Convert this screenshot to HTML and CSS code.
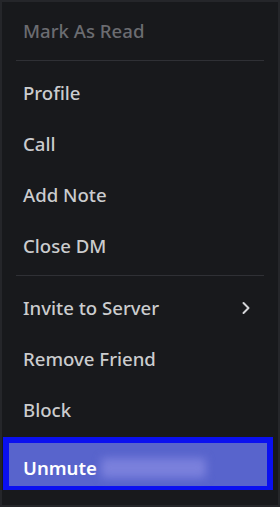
FILE: index.html
```html
<!DOCTYPE html>
<html>
<head>
<meta charset="utf-8">
<link rel="stylesheet" href="styles.css">
</head>
<body>
<div class="menu">
  <div class="item disabled">Mark As Read</div>
  <div class="sep"></div>
  <div class="item">Profile</div>
  <div class="item">Call</div>
  <div class="item">Add Note</div>
  <div class="item">Close DM</div>
  <div class="sep"></div>
  <div class="item">Invite to Server
    <svg class="chev" width="10" height="14" viewBox="0 0 10 14"><path d="M2.5 2 L7.5 7 L2.5 12" fill="none" stroke="#d4d5d8" stroke-width="2" stroke-linecap="round" stroke-linejoin="round"/></svg>
  </div>
  <div class="item">Remove Friend</div>
  <div class="item">Block</div>
  <div class="highlight">
    <div class="active"><span>Unmute</span><span class="blur"></span></div>
  </div>
</div>
</body>
</html>
```
FILE: styles.css
```css
html, body {
  margin: 0;
  padding: 0;
  background: #18191c;
}
.menu {
  box-sizing: border-box;
  width: 280px;
  height: 507px;
  border: 2px solid #25262a;
  background: #18191c;
  padding-top: 3px;
  font-family: "Noto Sans", "Open Sans", sans-serif;
  font-size: 18.6px;
  font-weight: 500;
  color: #cbccce;
}
.item {
  height: 51px;
  display: flex;
  align-items: center;
  justify-content: space-between;
  padding: 0 27px 0 21px;
}
.disabled {
  color: #6b6c71;
}
.sep {
  height: 1px;
  background: #2f3035;
  margin: 4px 14px 6px 14px;
}
.chev {
  display: block;
}
.highlight {
  margin: 2px 5px 0 1px;
  border: 6px solid #0a10f0;
  border-bottom-width: 4px;
}
.active {
  height: 43px;
  background: #5864cc;
  color: #ffffff;
  font-weight: 600;
  display: flex;
  align-items: center;
  padding: 6px 0 0 14px;
  box-sizing: border-box;
}
.blur {
  display: inline-block;
  width: 105px;
  height: 20px;
  margin-left: 4px;
  background: #7a80dc;
  filter: blur(4px);
  border-radius: 4px;
}
```
